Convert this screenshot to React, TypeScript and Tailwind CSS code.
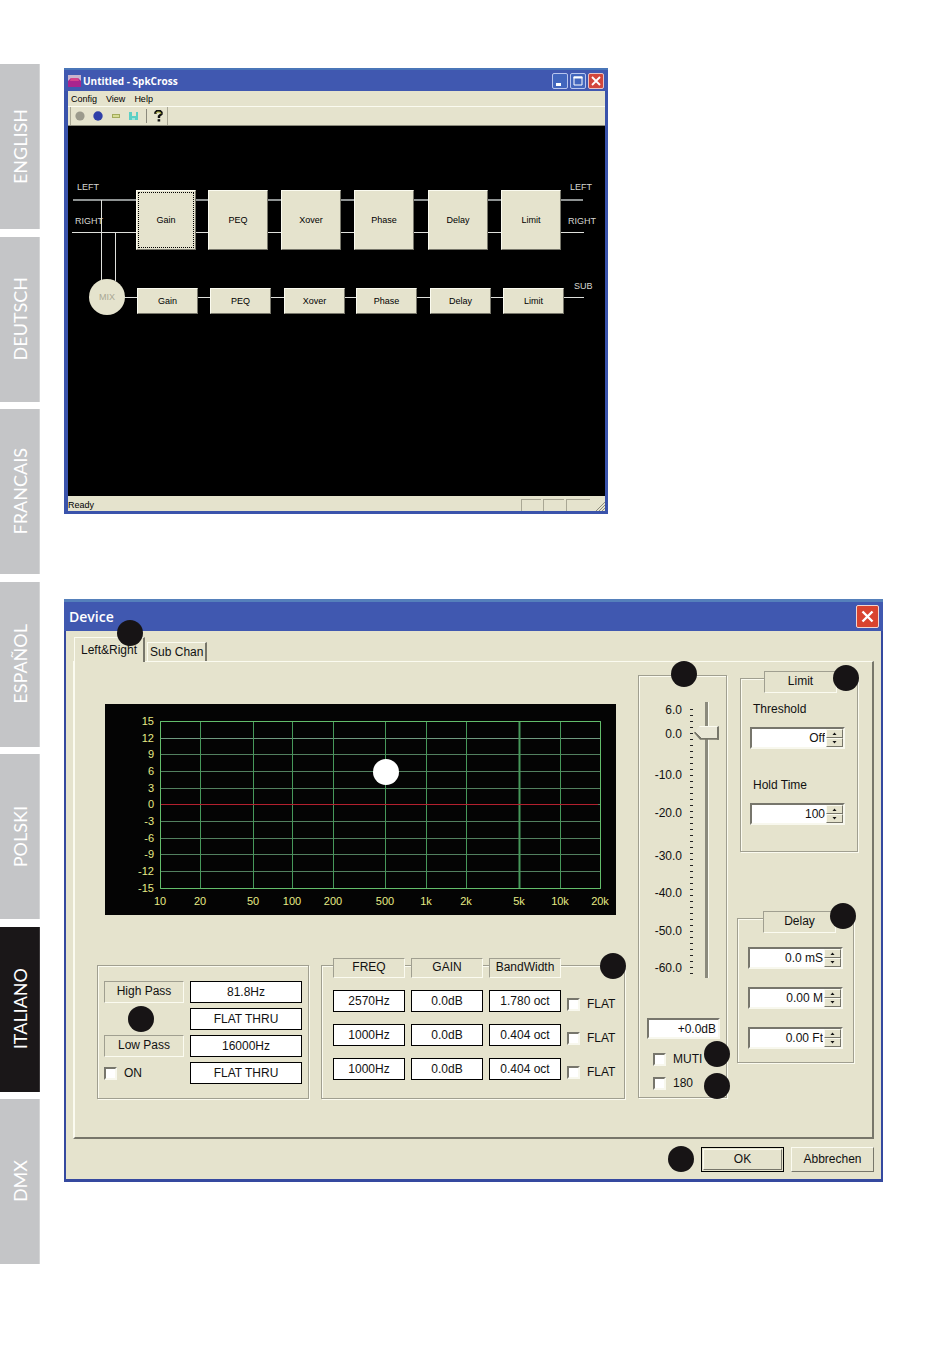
import React from 'react';
import clsx from 'clsx';

const languages = ['ENGLISH', 'DEUTSCH', 'FRANCAIS', 'ESPAÑOL', 'POLSKI', 'ITALIANO', 'DMX'];

const stages = [
  { label: 'Gain', x: 68, subX: 69 },
  { label: 'PEQ', x: 140, subX: 142 },
  { label: 'Xover', x: 213, subX: 216 },
  { label: 'Phase', x: 286, subX: 288 },
  { label: 'Delay', x: 360, subX: 362 },
  { label: 'Limit', x: 433, subX: 435 },
];

const gridRows = [
  { label: '15', y: 17 },
  { label: '12', y: 34 },
  { label: '9', y: 50 },
  { label: '6', y: 67 },
  { label: '3', y: 84 },
  { label: '0', y: 100 },
  { label: '-3', y: 117 },
  { label: '-6', y: 134 },
  { label: '-9', y: 150 },
  { label: '-12', y: 167 },
  { label: '-15', y: 184 },
];

const gridColumns = [
  { label: '10', x: 55 },
  { label: '20', x: 95 },
  { label: '50', x: 148 },
  { label: '100', x: 187 },
  { label: '200', x: 228 },
  { label: '500', x: 280 },
  { label: '1k', x: 321 },
  { label: '2k', x: 361 },
  { label: '5k', x: 414 },
  { label: '10k', x: 455 },
  { label: '20k', x: 495 },
];

const faderMarks = [
  { label: '6.0', y: 8 },
  { label: '0.0', y: 32 },
  { label: '-10.0', y: 73 },
  { label: '-20.0', y: 111 },
  { label: '-30.0', y: 154 },
  { label: '-40.0', y: 191 },
  { label: '-50.0', y: 229 },
  { label: '-60.0', y: 266 },
];

const bands = [
  { freq: '2570Hz', gain: '0.0dB', width: '1.780 oct' },
  { freq: '1000Hz', gain: '0.0dB', width: '0.404 oct' },
  { freq: '1000Hz', gain: '0.0dB', width: '0.404 oct' },
];

const raised =
  'border border-t-[#fbfbf0] border-l-[#fbfbf0] border-r-[#77766a] border-b-[#77766a] bg-[#e5e3cd]';
const sunken =
  'border-2 border-t-[#77766c] border-l-[#77766c] border-r-[#f8f8ee] border-b-[#f8f8ee] bg-white';
const etched = 'border border-[#a09f90] shadow-[1px_1px_0_#fbfbf0,inset_1px_1px_0_#fbfbf0]';

const Dot: React.FC<{ className?: string }> = ({ className }) => (
  <span className={clsx('block size-[26px] rounded-full bg-[#171415]', className)} />
);

const Plate: React.FC<{ className?: string; children: React.ReactNode }> = ({
  className,
  children,
}) => (
  <div
    className={clsx(
      'flex items-center justify-center border border-t-[#a09f90] border-l-[#a09f90] border-r-[#fbfbf0] border-b-[#fbfbf0] bg-[#e5e3cd] pb-0.5',
      className,
    )}
  >
    {children}
  </div>
);

const ValueBox: React.FC<{ label: string; value: string }> = ({ label, value }) => (
  <input
    type="text"
    aria-label={label}
    defaultValue={value}
    className="h-[22px] w-full min-w-0 border border-black bg-white text-center"
  />
);

const Check: React.FC<{ label: string; className?: string }> = ({ label, className }) => (
  <label className={clsx('flex items-center gap-[7px]', className)}>
    <input
      type="checkbox"
      className={clsx('size-[13px] shrink-0 appearance-none checked:bg-[#3f57b0]', sunken)}
    />
    {label}
  </label>
);

const SpinBox: React.FC<{ label: string; value: string; id?: string }> = ({ label, value, id }) => (
  <div className={clsx('flex h-[22px] w-[95px]', sunken)}>
    <input
      id={id}
      type="text"
      aria-label={label}
      defaultValue={value}
      className="w-0 flex-1 bg-transparent pr-px text-right"
    />
    <div className="flex w-[17px] flex-col">
      <button
        type="button"
        aria-label={`${label} up`}
        className={clsx('flex flex-1 items-center justify-center', raised)}
      >
        <svg width="5" height="3" viewBox="0 0 5 3">
          <path d="M.5 3L2.500 .5L4.500 3Z" fill="#111" />
        </svg>
      </button>
      <button
        type="button"
        aria-label={`${label} down`}
        className={clsx('flex flex-1 items-center justify-center', raised)}
      >
        <svg width="5" height="3" viewBox="0 0 5 3">
          <path d="M.5 0L2.500 2.500L4.500 0Z" fill="#111" />
        </svg>
      </button>
    </div>
  </div>
);

const Sidebar: React.FC = () => (
  <nav className="flex h-[1200px] w-10 shrink-0 flex-col justify-between font-['Lato',sans-serif] text-lg leading-6 text-white">
    {languages.map((language) => (
      <a
        key={language}
        href={`#${language.toLowerCase()}`}
        className={clsx(
          'flex h-[165px] items-center justify-center border-r',
          language === 'ITALIANO'
            ? 'border-[#3a3738] bg-[#1a1718]'
            : 'border-[#d4d5d6] bg-[#c4c5c7]',
        )}
      >
        <span className="rotate-180 [writing-mode:vertical-rl]">{language}</span>
      </a>
    ))}
  </nav>
);

const CaptionButtons: React.FC = () => (
  <div className="flex gap-0.5">
    <button
      type="button"
      aria-label="Minimize"
      className="size-4 rounded-xs border border-[#b9c6ee] bg-[#4266bd]"
    >
      <svg viewBox="0 0 14 14">
        <path d="M3 9h5v3H3z" fill="#fff" />
      </svg>
    </button>
    <button
      type="button"
      aria-label="Maximize"
      className="size-4 rounded-xs border border-[#b9c6ee] bg-[#4266bd]"
    >
      <svg viewBox="0 0 14 14">
        <path d="M3 3h8v8H3z" fill="none" stroke="#fff" />
        <path d="M2.500 3.500h9" stroke="#fff" strokeWidth="2" />
      </svg>
    </button>
    <button
      type="button"
      aria-label="Close"
      className="size-4 rounded-xs border border-[#e8c3c6] bg-[#d2463c]"
    >
      <svg viewBox="0 0 14 14">
        <path d="M3 3l8 8M11 3l-8 8" stroke="#fff" strokeWidth="1.800" />
      </svg>
    </button>
  </div>
);

const Toolbar: React.FC = () => (
  <div className="flex h-5 items-center border-t border-b border-t-[#fbfbf0] border-b-[#8b8a7c] pl-0.5">
    <div className="flex h-full items-center border-x border-[#a9a794] px-1">
      <button type="button" aria-label="Disconnect" className="w-[18px]">
        <svg width="10" height="10" viewBox="0 0 10 10">
          <circle cx="5" cy="5" r="4.600" fill="#9b9a8c" />
        </svg>
      </button>
      <button type="button" aria-label="Connect" className="w-[18px]">
        <svg width="10" height="10" viewBox="0 0 10 10">
          <circle cx="5" cy="5" r="4.700" fill="#2f3fa8" />
        </svg>
      </button>
      <button type="button" aria-label="Open" className="w-[18px]">
        <svg width="10" height="10" viewBox="0 0 10 10">
          <path d="M1 3h8v4H1z" fill="#a3ab5c" />
          <path d="M2 4h6v2H2z" fill="#d6dc94" />
        </svg>
      </button>
      <button type="button" aria-label="Save" className="w-[17px]">
        <svg width="10" height="10" viewBox="0 0 10 10">
          <path d="M0 1h3v4h4V1h2v8H0z" fill="#5bd0c5" />
          <path d="M3 7h3v2H3z" fill="#9be5dc" />
        </svg>
      </button>
      <span className="h-3.5 border-l border-[#8b8a7c]" />
      <button type="button" aria-label="About" className="ml-[7px]">
        <svg width="9" height="12" viewBox="0 0 9 12">
          <path
            d="M1.500 4V2.500L3 1h3l1.500 1.500V4L5 6.200V8"
            fill="none"
            stroke="#111"
            strokeWidth="2.400"
          />
          <path d="M2 3.500L3 2h2.800l1 1v1" fill="none" stroke="#d9dd49" strokeWidth=".8" />
          <path d="M3.600 9.200h2.600v2.300H3.600z" fill="#111" />
        </svg>
      </button>
    </div>
  </div>
);

const SignalCanvas: React.FC = () => (
  <div className="relative h-[370px] overflow-hidden bg-black text-[9px] leading-3">
    <svg width="537" height="370" viewBox="0 0 537 370" className="block">
      <path d="M5 74H515" stroke="#8e9292" strokeWidth="2" />
      <path d="M4 106.500H516M33.500 74V155M47.500 106V155M50 171.500H516" stroke="#dfe0dc" />
      <circle cx="39" cy="171" r="18" fill="#e5e3cd" />
      <g fill="#d8d8d2" fontFamily="Liberation Sans, sans-serif" fontSize="9">
        <text x="9" y="64">LEFT</text>
        <text x="7" y="98">RIGHT</text>
        <text x="502" y="64">LEFT</text>
        <text x="500" y="98">RIGHT</text>
        <text x="506" y="163">SUB</text>
        <text x="39" y="174" textAnchor="middle" fill="#a9a794">MIX</text>
      </g>
    </svg>
    {stages.map(({ label, x, subX }) => (
      <React.Fragment key={label}>
        <button
          type="button"
          style={{ left: x }}
          className={clsx('absolute top-16 h-[60px] w-[60px] p-px', raised)}
        >
          <span
            className={clsx(
              'flex size-full items-center justify-center',
              label === 'Gain' && 'border border-dotted border-black',
            )}
          >
            {label}
          </span>
        </button>
        <button
          type="button"
          aria-label={`${label} sub`}
          style={{ left: subX }}
          className={clsx('absolute top-[162px] h-[26px] w-[61px]', raised)}
        >
          {label}
        </button>
      </React.Fragment>
    ))}
  </div>
);

const MainWindow: React.FC = () => (
  <section className="w-full max-w-[544px] bg-[#3a53ab] pb-[3px]">
    <header className="flex h-[23px] items-center border-t-2 border-[#4a76b8] bg-[#4058b0] pr-1 pl-1">
      <svg width="13" height="12" viewBox="0 0 13 12">
        <path d="M0 0h13v12H0z" fill="#c9b3cd" />
        <path d="M0 12V6l3-3h7l3 3v6z" fill="#a8258e" />
        <path d="M3 3h7l1 3H2z" fill="#d6428b" />
      </svg>
      <h1 className="flex-1 pl-0.5 font-['Open_Sans',sans-serif] text-[10px] leading-4 font-bold text-white">
        Untitled - SpkCross
      </h1>
      <CaptionButtons />
    </header>
    <div className="mr-[3px] ml-1 bg-[#e5e3cd] text-[9px] leading-3">
      <div className="flex h-[15px] items-center gap-[9px] pl-[3px]">
        <button type="button">Config</button>
        <button type="button">View</button>
        <button type="button">Help</button>
      </div>
      <Toolbar />
      <SignalCanvas />
      <div className="flex h-[15px] items-end">
        <span className="flex-1">Ready</span>
        <div className="flex h-3 gap-0.5 pr-1.5">
          <span className="w-5 border-t border-l border-[#a9a794]" />
          <span className="w-[21px] border-t border-l border-[#a9a794]" />
          <span className="w-6 border-t border-l border-[#a9a794]" />
        </div>
        <svg width="9" height="9" viewBox="0 0 9 9">
          <path d="M0 9L9 0M3 9L9 3M6 9L9 6" stroke="#8b8a7c" />
        </svg>
      </div>
    </div>
  </section>
);

const ResponseGraph: React.FC = () => (
  <svg viewBox="0 0 511 211" className="block w-full">
    <path d="M0 0h511v211H0z" fill="#040404" />
    {gridRows.map(({ label, y }) => (
      <path key={label} d={`M55 ${y + 0.5}H496`} stroke={y === 34 ? '#6f9a80' : '#52805f'} />
    ))}
    {gridColumns.map(({ label, x }) => (
      <path
        key={label}
        d={`M${x + 0.5} 17V185`}
        stroke="#46985a"
        strokeWidth={label === '5k' ? 2 : 1}
      />
    ))}
    <path d="M55.500 17.500H495.500V184.500H55.500Z" fill="none" stroke="#63bd6b" />
    <path d="M56 100.500H493" stroke="#b3202e" />
    <g fill="#e6ea86" fontFamily="Liberation Sans, sans-serif" fontSize="11">
      {gridRows.map(({ label, y }) => (
        <text key={label} x="49" y={y + 4} textAnchor="end">
          {label}
        </text>
      ))}
      {gridColumns.map(({ label, x }) => (
        <text key={label} x={x} y="201" textAnchor="middle">
          {label}
        </text>
      ))}
    </g>
    <circle cx="281" cy="68" r="13" fill="#fff" />
  </svg>
);

const CrossoverGroup: React.FC = () => (
  <div
    className={clsx(
      'grid h-[134px] w-[212px] shrink-0 grid-cols-[80px_1fr] content-start gap-x-1.5 gap-y-[5px] px-1.5 pt-[15px]',
      etched,
    )}
  >
    <Plate>High Pass</Plate>
    <ValueBox label="High pass frequency" value="81.8Hz" />
    <div className="-my-0.5 flex items-center pl-6">
      <Dot />
    </div>
    <ValueBox label="High pass slope" value="FLAT THRU" />
    <Plate>Low Pass</Plate>
    <ValueBox label="Low pass frequency" value="16000Hz" />
    <Check label="ON" />
    <ValueBox label="Low pass slope" value="FLAT THRU" />
  </div>
);

const EqualizerGroup: React.FC = () => (
  <div className={clsx('relative h-[134px] flex-1 pr-1.5 pl-[11px]', etched)}>
    <Dot className="absolute -top-[13px] -right-0.5" />
    <div className="-mt-2 grid grid-cols-[72px_72px_72px_1fr] items-center gap-x-1.5 gap-y-3">
      <Plate className="h-5">FREQ</Plate>
      <Plate className="h-5">GAIN</Plate>
      <Plate className="h-5">BandWidth</Plate>
      <span />
      {bands.map(({ freq, gain, width }, index) => (
        <React.Fragment key={index}>
          <ValueBox label={`Frequency ${index + 1}`} value={freq} />
          <ValueBox label={`Gain ${index + 1}`} value={gain} />
          <ValueBox label={`Bandwidth ${index + 1}`} value={width} />
          <Check label="FLAT" className="mt-1.5" />
        </React.Fragment>
      ))}
    </div>
  </div>
);

const Fader: React.FC = () => (
  <div className={clsx('relative mt-[13px] h-[423px] w-[89px] shrink-0 pt-[26px]', etched)}>
    <Dot className="absolute -top-[15px] left-8" />
    <div className="flex pl-2">
      <svg width="47" height="276" viewBox="0 0 47 276" className="block">
        <g fontFamily="Liberation Sans, sans-serif" fontSize="12" fill="#111">
          {faderMarks.map(({ label, y }) => (
            <text key={label} x="35" y={y + 4} textAnchor="end">
              {label}
            </text>
          ))}
        </g>
        {Array.from({ length: 45 }, (_, i) => (
          <path key={i} d={`M43 ${7.5 + i * 6}h3`} stroke="#222" />
        ))}
      </svg>
      <input
        type="range"
        aria-label="Level"
        min={-60}
        max={6}
        defaultValue={0}
        className="h-[276px] w-[25px] appearance-none bg-[linear-gradient(90deg,transparent_11px,#8b8a7c_11px,#8b8a7c_14px,#fbfbf0_14px,#fbfbf0_15px,transparent_15px)] [direction:rtl] [writing-mode:vertical-lr] [&::-webkit-slider-thumb]:h-3.5 [&::-webkit-slider-thumb]:w-[25px] [&::-webkit-slider-thumb]:appearance-none [&::-webkit-slider-thumb]:border-t [&::-webkit-slider-thumb]:border-r-2 [&::-webkit-slider-thumb]:border-b-2 [&::-webkit-slider-thumb]:border-t-[#fbfbf0] [&::-webkit-slider-thumb]:border-r-[#77766a] [&::-webkit-slider-thumb]:border-b-[#77766a] [&::-webkit-slider-thumb]:bg-[linear-gradient(45deg,#77766a_5px,#e9e7d6_5px)] [&::-webkit-slider-thumb]:[clip-path:polygon(0_50%,6px_0,100%_0,100%_100%,6px_100%)]"
      />
    </div>
    <div className="mt-10 pr-1.5 pl-2">
      <input
        type="text"
        aria-label="Level value"
        defaultValue="+0.0dB"
        className={clsx('h-[21px] w-full pr-0.5 text-right', sunken)}
      />
    </div>
    <div className="relative mt-3 flex flex-col gap-2 pl-3.5">
      <Check label="MUTI" className="h-4" />
      <Check label="180" className="h-4" />
      <Dot className="absolute -top-2.5 -right-1" />
      <Dot className="absolute top-[22px] -right-1" />
    </div>
  </div>
);

const DeviceWindow: React.FC = () => (
  <section className="w-full bg-[#35499f] pb-[3px] text-xs leading-4 text-[#111]">
    <header className="flex h-8 items-center justify-between border-t-3 border-[#5580bb] bg-[#4058b0] pr-1 pl-[5px]">
      <h2 className="font-['Open_Sans',sans-serif] text-sm leading-5 font-semibold text-white">
        Device
      </h2>
      <button
        type="button"
        aria-label="Close"
        className="size-[23px] rounded-xs border border-[#f0d5d0] bg-[#d9432f]"
      >
        <svg viewBox="0 0 21 21">
          <path d="M5.500 5.500l10 10M15.500 5.500l-10 10" stroke="#fff" strokeWidth="2.400" />
        </svg>
      </button>
    </header>
    <div className="mx-0.5 bg-[#e5e3cd] px-[7px] pt-1.5 pb-[7px]">
      <div className="flex items-end gap-0.5 pl-px">
        <button
          type="button"
          className="relative -mb-px flex h-[25px] items-center border-t border-r-2 border-l border-t-[#fbfbf0] border-r-[#77766a] border-l-[#fbfbf0] bg-[#e5e3cd] px-1.5"
        >
          Left&amp;Right
          <Dot className="absolute -top-[18px] right-0" />
        </button>
        <button
          type="button"
          className="flex h-[19px] items-center border-t border-r-2 border-l border-t-[#fbfbf0] border-r-[#77766a] border-l-[#fbfbf0] px-0.5"
        >
          Sub Chan
        </button>
      </div>
      <div className="flex items-start border-t border-r-2 border-b-2 border-l-2 border-t-[#fbfbf0] border-r-[#77766a] border-b-[#77766a] border-l-[#fbfbf0] pr-3.5 pb-[38px] pl-[22px]">
        <div className="min-w-0 flex-1 pt-[42px]">
          <div className="pr-[9px] pl-2">
            <ResponseGraph />
          </div>
          <div className="mt-[50px] flex gap-3">
            <CrossoverGroup />
            <EqualizerGroup />
          </div>
        </div>
        <div className="w-[13px] shrink-0" />
        <Fader />
        <div className="w-2.5 shrink-0" />
        <div className="w-[121px] shrink-0 pt-4">
          <div className={clsx('relative ml-[3px] h-[174px] pl-[9px]', etched)}>
            <Plate className="-mt-2 ml-3.5 h-[22px] w-[73px]">Limit</Plate>
            <Dot className="absolute -top-[14px] -right-0.5" />
            <label htmlFor="threshold" className="mt-2 ml-[3px] block">
              Threshold
            </label>
            <div className="mt-2.5">
              <SpinBox id="threshold" label="Threshold" value="Off" />
            </div>
            <label htmlFor="hold-time" className="mt-7 ml-[3px] block">
              Hold Time
            </label>
            <div className="mt-2.5">
              <SpinBox id="hold-time" label="Hold Time" value="100" />
            </div>
          </div>
          <div className={clsx('relative mt-[66px] mr-1 h-[145px] pl-2.5', etched)}>
            <Plate className="-mt-2 ml-[15px] h-[22px] w-[73px]">Delay</Plate>
            <Dot className="absolute -top-4 -right-[3px]" />
            <div className="mt-3.5 flex flex-col gap-[18px]">
              <SpinBox label="Delay in milliseconds" value="0.0 mS" />
              <SpinBox label="Delay in meters" value="0.00 M" />
              <SpinBox label="Delay in feet" value="0.00 Ft" />
            </div>
          </div>
        </div>
      </div>
      <div className="mt-[7px] flex items-center justify-end gap-[7px]">
        <Dot />
        <button type="button" className="h-[25px] w-[83px] border border-black p-px">
          <span className={clsx('flex size-full items-center justify-center', raised)}>OK</span>
        </button>
        <button type="button" className={clsx('h-[25px] w-[83px]', raised)}>
          Abbrechen
        </button>
      </div>
    </div>
  </section>
);

const App: React.FC = () => (
  <div className="flex min-h-screen bg-white pt-16 pb-[84px] font-['Liberation_Sans',Arial,sans-serif]">
    <Sidebar />
    <main className="flex min-w-0 flex-1 flex-col gap-[85px] pt-1 pr-[67px] pl-6">
      <MainWindow />
      <DeviceWindow />
    </main>
  </div>
);

export default App;
